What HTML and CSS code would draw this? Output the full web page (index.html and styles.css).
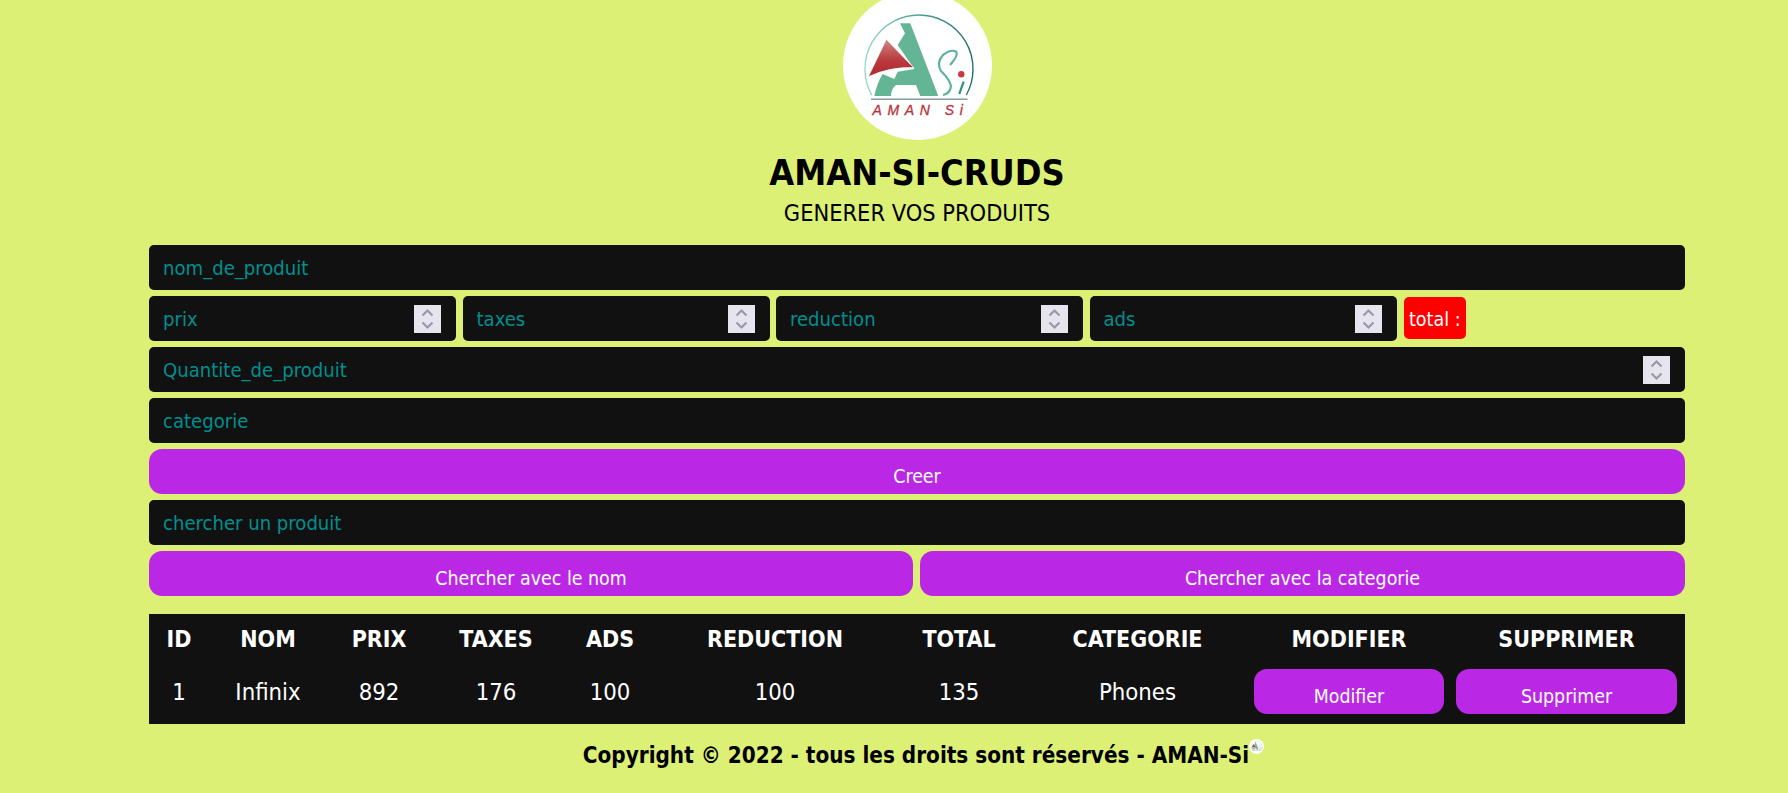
FILE: index.html
```html
<!DOCTYPE html>
<html lang="fr">
<head>
<meta charset="utf-8">
<title>AMAN-SI-CRUDS</title>
<link rel="stylesheet" href="styles.css">
</head>
<body>
<svg class="defs" width="0" height="0" aria-hidden="true">
  <defs>
    <linearGradient id="arc" x1="0" y1="0" x2="1" y2="0">
      <stop offset="0" stop-color="#9ad8cc"/>
      <stop offset="0.5" stop-color="#4f9f98"/>
      <stop offset="1" stop-color="#1f6f6c"/>
    </linearGradient>
    <linearGradient id="tri" x1="0" y1="0" x2="0" y2="1">
      <stop offset="0" stop-color="#cf8585"/>
      <stop offset="0.55" stop-color="#b93c40"/>
      <stop offset="1" stop-color="#b3262c"/>
    </linearGradient>
    <symbol id="logo" viewBox="0 0 149 149">
      <circle cx="74.5" cy="74.5" r="74.5" fill="#fff"/>
      <path d="M28.7 104 A54 54 0 1 1 123.3 104" fill="none" stroke="url(#arc)" stroke-width="1.4"/>
      <path d="M57 32.3 H67.3 L95.3 105 H77.3 L73 94 H53 Q48 98 48 105 H31.3 Q34 92 39.7 83 L51.3 88 L54.7 80.7 L71.3 78 L54.7 54 L62 42.3 Z" fill="#64b596"/>
      <path d="M43.3 48.3 L70.7 76.7 Q48 75.5 25.3 85.7 Z" fill="url(#tri)" stroke="#fff" stroke-width="0.8"/>
      <path d="M107 74 Q116 64 113 60.5 Q108 58 100 64 Q93 72 98 80 Q107 89 108 95 Q107 103 100 104" fill="none" stroke="#5fb2a0" stroke-width="2.2"/>
      <path d="M120.7 90.7 Q118 98 116.3 103" fill="none" stroke="#2f8f85" stroke-width="2.2"/>
      <circle cx="118.3" cy="83.3" r="3.2" fill="#c6393f"/>
      <rect x="28" y="107.5" width="96.5" height="1.5" fill="#7f9fa3"/>
      <text class="logo-text" x="29.5" y="124">AMAN Si</text>
    </symbol>
  </defs>
</svg>
<main class="page">
  <header class="head">
    <svg class="logo" viewBox="0 0 149 149" role="img" aria-label="AMAN Si"><use href="#logo"/></svg>
    <h1 class="title">AMAN-SI-CRUDS</h1>
    <h2 class="subtitle">GENERER VOS PRODUITS</h2>
  </header>

  <section class="form">
    <div class="field"><input class="input" type="text" placeholder="nom_de_produit"></div>
    <div class="price-row">
      <div class="field field-price"><input class="input" type="text" placeholder="prix"><span class="spin"><svg viewBox="0 0 27 28"><path class="chev" d="M8.5 10.5 L13.5 5.5 L18.5 10.5 M8.5 17.5 L13.5 22.5 L18.5 17.5"/></svg></span></div>
      <div class="field field-price"><input class="input" type="text" placeholder="taxes"><span class="spin"><svg viewBox="0 0 27 28"><path class="chev" d="M8.5 10.5 L13.5 5.5 L18.5 10.5 M8.5 17.5 L13.5 22.5 L18.5 17.5"/></svg></span></div>
      <div class="field field-price"><input class="input" type="text" placeholder="reduction"><span class="spin"><svg viewBox="0 0 27 28"><path class="chev" d="M8.5 10.5 L13.5 5.5 L18.5 10.5 M8.5 17.5 L13.5 22.5 L18.5 17.5"/></svg></span></div>
      <div class="field field-price"><input class="input" type="text" placeholder="ads"><span class="spin"><svg viewBox="0 0 27 28"><path class="chev" d="M8.5 10.5 L13.5 5.5 L18.5 10.5 M8.5 17.5 L13.5 22.5 L18.5 17.5"/></svg></span></div>
      <small class="total">total :</small>
    </div>
    <div class="field"><input class="input" type="text" placeholder="Quantite_de_produit"><span class="spin"><svg viewBox="0 0 27 28"><path class="chev" d="M8.5 10.5 L13.5 5.5 L18.5 10.5 M8.5 17.5 L13.5 22.5 L18.5 17.5"/></svg></span></div>
    <div class="field"><input class="input" type="text" placeholder="categorie"></div>
    <button class="btn" type="button">Creer</button>
    <div class="field"><input class="input" type="text" placeholder="chercher un produit"></div>
    <div class="search-row">
      <button class="btn" type="button">Chercher avec le nom</button>
      <button class="btn" type="button">Chercher avec la categorie</button>
    </div>
  </section>

  <table class="table">
    <colgroup>
      <col class="c-id"><col class="c-nom"><col class="c-prix"><col class="c-taxes"><col class="c-ads"><col class="c-red"><col class="c-total"><col class="c-cat"><col class="c-mod"><col class="c-sup">
    </colgroup>
    <thead>
      <tr><th>ID</th><th>NOM</th><th>PRIX</th><th>TAXES</th><th>ADS</th><th>REDUCTION</th><th>TOTAL</th><th>CATEGORIE</th><th class="cell-mod">MODIFIER</th><th class="cell-sup">SUPPRIMER</th></tr>
    </thead>
    <tbody>
      <tr><td>1</td><td>Infinix</td><td>892</td><td>176</td><td>100</td><td>100</td><td>135</td><td>Phones</td><td class="cell-mod"><button class="btn" type="button">Modifier</button></td><td class="cell-sup"><button class="btn" type="button">Supprimer</button></td></tr>
    </tbody>
  </table>

  <footer class="foot">
    <span class="copy">Copyright © 2022 - tous les droits sont réservés - AMAN-Si</span><svg class="logo-small" viewBox="0 0 149 149" aria-hidden="true"><use href="#logo"/></svg>
  </footer>
</main>
</body>
</html>
```
FILE: styles.css
```css
* { box-sizing: border-box; }
html, body { margin: 0; padding: 0; }
body {
  background: #dcf076;
  color: #000;
  font-family: "DejaVu Sans Condensed", "DejaVu Sans", sans-serif;
  overflow: hidden;
  height: 793px;
}
.defs { position: absolute; }
.page { width: 1536px; margin-left: 149px; }
.head { display: flex; flex-direction: column; align-items: center; }
.logo { display: block; width: 149px; height: 149px; margin-top: -9px; }
.logo-text {
  font-family: "Liberation Sans", sans-serif;
  font-style: italic;
  font-weight: 400;
  font-size: 14px;
  letter-spacing: 5.6px;
  fill: #b8323c;
  stroke: #b8323c;
  stroke-width: 0.3px;
}
.title { margin: 13px 0 0; font-size: 35.8px; line-height: 40px; font-weight: 700; }
.subtitle { margin: 5px 0 0; font-size: 23.4px; line-height: 30px; font-weight: 400; }
.form { display: flex; flex-direction: column; gap: 6px; margin-top: 17px; }
.field {
  display: flex;
  align-items: center;
  height: 45px;
  padding: 0 15px 0 14px;
  background: #111;
  border-radius: 5px;
}
.input {
  flex: 1;
  min-width: 0;
  border: 0;
  outline: 0;
  padding: 0;
  background: transparent;
  color: #fff;
  font: inherit;
  font-size: 20.1px;
}
.input::placeholder { color: #008f8f; opacity: 1; }
.price-row { display: flex; gap: 6.5px; align-items: flex-start; }
.field-price { width: 307px; }
.spin { flex: none; width: 27px; height: 28px; background: #e6e5ee; }
.spin svg { display: block; width: 27px; height: 28px; }
.chev { fill: none; stroke: #9a98a8; stroke-width: 2.2; }
.total {
  margin: 1px 0 0 1px;
  height: 42px;
  padding: 3px 5px 0;
  display: flex;
  align-items: center;
  background: #f00;
  color: #fff;
  border-radius: 5px;
  font-size: 19.5px;
}
.btn {
  display: block;
  width: 100%;
  height: 45px;
  padding: 9px 0 0;
  border: 0;
  border-radius: 13px;
  background: #ba28e6;
  color: #fff;
  font: inherit;
  font-size: 19.4px;
}
.search-row { display: grid; grid-template-columns: 764px 765px; gap: 7px; }
.table {
  width: 100%;
  margin-top: 18px;
  border-collapse: collapse;
  table-layout: fixed;
  background: #111;
  color: #fff;
  text-align: center;
}
.table th { height: 50px; padding: 0; font-size: 23px; font-weight: 700; }
.table td { height: 60px; padding: 5px 0 10px; font-size: 23.7px; font-weight: 400; }
.table .cell-mod { padding-left: 6px; padding-right: 6px; }
.table .cell-sup { padding-left: 6px; padding-right: 8px; }
.c-id { width: 60px; }
.c-nom { width: 118px; }
.c-prix { width: 104px; }
.c-taxes { width: 130px; }
.c-ads { width: 98px; }
.c-red { width: 232px; }
.c-total { width: 136px; }
.c-cat { width: 221px; }
.c-mod { width: 202px; }
.c-sup { width: 235px; }
.foot { display: flex; justify-content: center; margin-top: 15px; padding-left: 13px; font-weight: 700; font-size: 22.3px; line-height: 32px; }
.copy { display: block; }
.logo-small { display: block; width: 15px; height: 15px; }
```
